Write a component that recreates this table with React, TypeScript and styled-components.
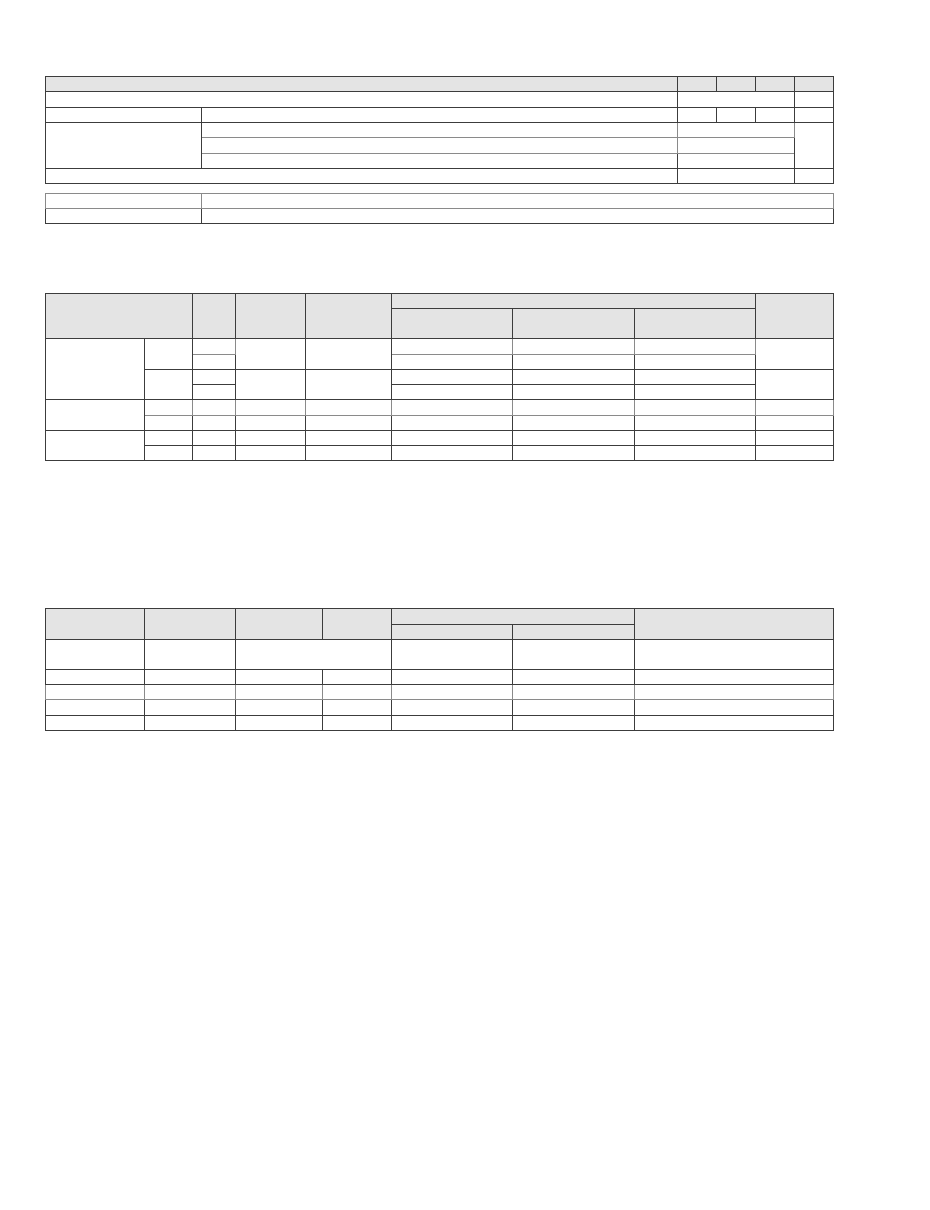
import React from 'react';
import styled, { createGlobalStyle } from 'styled-components';

const GlobalStyle = createGlobalStyle`
  html, body {
    margin: 0;
    padding: 0;
    background: #ffffff;
    font-family: "Liberation Sans", Arial, sans-serif;
  }
`;

const Page = styled.div`
  width: 930px;
  min-height: 1210px;
  box-sizing: border-box;
  padding: 76px 0 0 45px;
  display: flex;
  flex-direction: column;
`;

const Sheet = styled.table<{ $top?: number }>`
  width: 788px;
  table-layout: fixed;
  border-collapse: collapse;
  margin-top: ${(p) => p.$top ?? 0}px;
  font-size: 9px;
`;

const Row = styled.tr<{ $h?: number }>`
  height: ${(p) => p.$h ?? 15.33}px;
`;

const Cell = styled.td<{ $soft?: boolean }>`
  border: 1px solid ${(p) => (p.$soft ? '#8a8a8a' : '#3c3c3c')};
  padding: 0;
  background: #ffffff;
`;

const HeadCell = styled.th`
  border: 1px solid #3c3c3c;
  padding: 0;
  background: #e4e4e4;
  font-weight: normal;
`;

const Cols: React.FC<{ widths: number[] }> = ({ widths }) => (
  <colgroup>
    {widths.map((w, i) => <col key={i} style={{ width: `${w}px` }} />)}
  </colgroup>
);

const SummaryTable = () => (
  <Sheet>
    <Cols widths={[156, 476, 39, 39, 39, 39]} />
    <tbody>
      <Row>
        <HeadCell colSpan={2} />
        <HeadCell />
        <HeadCell />
        <HeadCell />
        <HeadCell />
      </Row>
      <Row>
        <Cell colSpan={2} />
        <Cell colSpan={3} />
        <Cell />
      </Row>
      <Row>
        <Cell />
        <Cell />
        <Cell />
        <Cell />
        <Cell />
        <Cell />
      </Row>
      <Row>
        <Cell rowSpan={3} />
        <Cell $soft />
        <Cell colSpan={3} $soft />
        <Cell rowSpan={3} />
      </Row>
      <Row>
        <Cell $soft />
        <Cell colSpan={3} $soft />
      </Row>
      <Row>
        <Cell />
        <Cell colSpan={3} />
      </Row>
      <Row>
        <Cell colSpan={2} />
        <Cell colSpan={3} />
        <Cell />
      </Row>
    </tbody>
  </Sheet>
);

const NoteTable = () => (
  <Sheet $top={8.5}>
    <Cols widths={[156, 632]} />
    <tbody>
      <Row>
        <Cell $soft />
        <Cell $soft />
      </Row>
      <Row>
        <Cell />
        <Cell />
      </Row>
    </tbody>
  </Sheet>
);

const BodyRow: React.FC<{ cells: number }> = ({ cells }) => (
  <Row $h={15.25}>
    {Array.from({ length: cells }).map((_, i) => <Cell key={i} />)}
  </Row>
);

const DetailTable = () => (
  <Sheet $top={68.5}>
    <Cols widths={[99, 48, 43, 70, 86, 121.4, 121.3, 121.3, 78]} />
    <tbody>
      <Row>
        <HeadCell rowSpan={2} colSpan={2} />
        <HeadCell rowSpan={2} />
        <HeadCell rowSpan={2} />
        <HeadCell rowSpan={2} />
        <HeadCell colSpan={3} />
        <HeadCell rowSpan={2} />
      </Row>
      <Row $h={30}>
        <HeadCell />
        <HeadCell />
        <HeadCell />
      </Row>
      <Row $h={15.25}>
        <Cell rowSpan={4} />
        <Cell rowSpan={2} />
        <Cell $soft />
        <Cell rowSpan={2} />
        <Cell rowSpan={2} />
        <Cell $soft />
        <Cell $soft />
        <Cell $soft />
        <Cell rowSpan={2} />
      </Row>
      <Row $h={15.25}>
        <Cell />
        <Cell />
        <Cell />
        <Cell />
      </Row>
      <Row $h={15.25}>
        <Cell rowSpan={2} />
        <Cell />
        <Cell rowSpan={2} />
        <Cell rowSpan={2} />
        <Cell />
        <Cell />
        <Cell />
        <Cell rowSpan={2} />
      </Row>
      <Row $h={15.25}>
        <Cell />
        <Cell />
        <Cell />
        <Cell />
      </Row>
      <Row $h={15.25}>
        <Cell rowSpan={2} />
        <Cell $soft />
        <Cell $soft />
        <Cell $soft />
        <Cell $soft />
        <Cell $soft />
        <Cell $soft />
        <Cell $soft />
        <Cell $soft />
      </Row>
      <BodyRow cells={8} />
      <Row $h={15.25}>
        <Cell rowSpan={2} />
        <Cell />
        <Cell />
        <Cell />
        <Cell />
        <Cell />
        <Cell />
        <Cell />
        <Cell />
      </Row>
      <BodyRow cells={8} />
    </tbody>
  </Sheet>
);

const ResultTable = () => (
  <Sheet $top={147}>
    <Cols widths={[99, 91, 87, 69, 121.4, 121.3, 199.3]} />
    <tbody>
      <Row>
        <HeadCell rowSpan={2} />
        <HeadCell rowSpan={2} />
        <HeadCell rowSpan={2} />
        <HeadCell rowSpan={2} />
        <HeadCell colSpan={2} />
        <HeadCell rowSpan={2} />
      </Row>
      <Row>
        <HeadCell />
        <HeadCell />
      </Row>
      <Row $h={30}>
        <Cell />
        <Cell />
        <Cell colSpan={2} />
        <Cell />
        <Cell />
        <Cell />
      </Row>
      <BodyRow cells={7} />
      <Row $h={15.25}>
        {Array.from({ length: 7 }).map((_, i) => <Cell key={i} $soft />)}
      </Row>
      <BodyRow cells={7} />
      <BodyRow cells={7} />
    </tbody>
  </Sheet>
);

const App = () => (
  <>
    <GlobalStyle />
    <Page>
      <SummaryTable />
      <NoteTable />
      <DetailTable />
      <ResultTable />
    </Page>
  </>
);

export default App;
